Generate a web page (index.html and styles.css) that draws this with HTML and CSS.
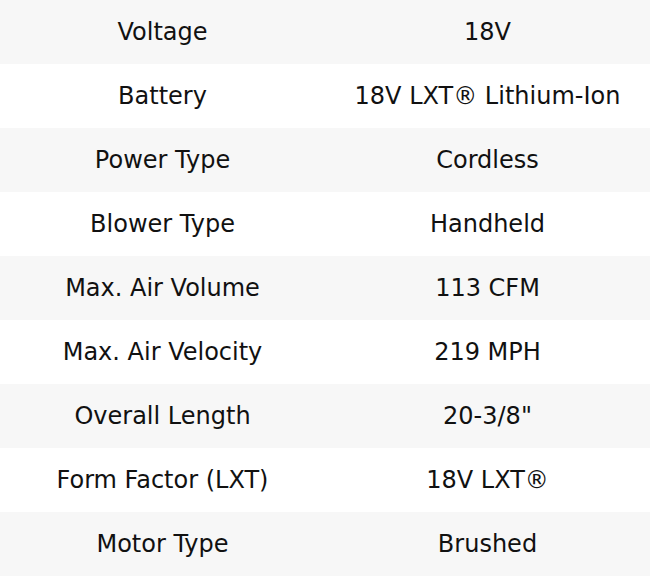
FILE: index.html
```html
<!DOCTYPE html>
<html>
<head>
<meta charset="utf-8">
<link rel="stylesheet" href="styles.css">
</head>
<body>
<table class="specs">
<tbody>
<tr><td>Voltage</td><td>18V</td></tr>
<tr><td>Battery</td><td>18V LXT® Lithium-Ion</td></tr>
<tr><td>Power Type</td><td>Cordless</td></tr>
<tr><td>Blower Type</td><td>Handheld</td></tr>
<tr><td>Max. Air Volume</td><td>113 CFM</td></tr>
<tr><td>Max. Air Velocity</td><td>219 MPH</td></tr>
<tr><td>Overall Length</td><td>20-3/8"</td></tr>
<tr><td>Form Factor (LXT)</td><td>18V LXT®</td></tr>
<tr><td>Motor Type</td><td>Brushed</td></tr>
</tbody>
</table>
</body>
</html>
```
FILE: styles.css
```css
html, body {
  margin: 0;
  padding: 0;
  background: #fff;
}
.specs {
  width: 650px;
  border-collapse: collapse;
  table-layout: fixed;
  font-family: "DejaVu Sans", sans-serif;
  font-size: 24px;
  color: #111;
}
.specs td {
  width: 50%;
  height: 64px;
  padding: 0;
  text-align: center;
  vertical-align: middle;
}
.specs tr:nth-child(odd) {
  background: #f7f7f7;
}
```
